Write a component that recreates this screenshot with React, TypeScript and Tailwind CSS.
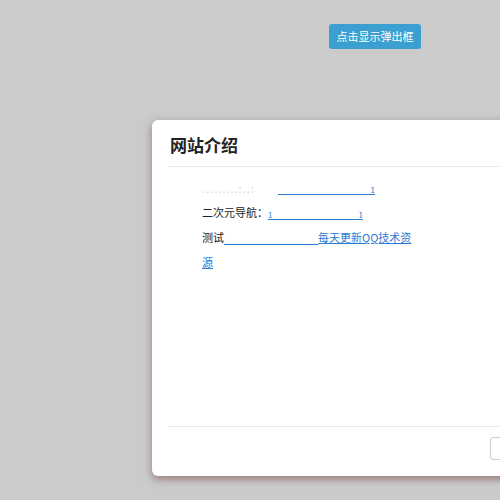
import React from "react";

export default function App() {
  return (
    <div className="w-[500px] h-[500px] bg-[#cbcbcb] overflow-hidden relative" style={{ fontFamily: '"Noto Sans CJK SC", "Liberation Sans", sans-serif' }}>
      <div className="flex justify-end pr-[79px] pt-[24px]">
        <button className="h-[25px] w-[92px] rounded-[3px] bg-[#3b9fd1] text-white text-[11px] leading-[25px]">点击显示弹出框</button>
      </div>
      <div className="absolute left-[152px] top-[120px] w-[420px] h-[356px] bg-white rounded-[6px] shadow-[0_3px_8px_rgba(110,50,50,0.55)] px-[16px] flex flex-col">
        <div className="pt-[13px] pb-[9px] border-b border-[#e8e8e8]">
          <h3 className="text-[17px] font-bold text-[#222] leading-[24px] pl-[2px]" style={{ fontFamily: '"Noto Sans CJK SC", serif' }}>网站介绍</h3>
        </div>
        <div className="flex-1 pl-[34px] pt-[8px] text-[11px] text-[#222] leading-[25px]">
          <div className="w-[217px]">
            <p className="whitespace-nowrap">
              <span className="inline-block w-[76px] text-[#d4d4d4] tracking-[1px] overflow-hidden align-[-3px] h-[14px] leading-[14px]">.........:..:</span>
              <a className="relative inline-block w-[97px] h-[10px] align-[-3px] border-b border-[#2b7bd3]">
                <span className="absolute right-0 bottom-0 text-[8px] leading-none text-[#2b7bd3]">1</span>
              </a>
            </p>
            <p className="whitespace-nowrap">
              二次元导航：<a className="relative inline-block w-[95px] h-[10px] align-[-3px] border-b border-[#2b7bd3]">
                <span className="absolute left-0 bottom-0 text-[8px] leading-none text-[#2b7bd3]">1</span>
                <span className="absolute right-0 bottom-0 text-[8px] leading-none text-[#2b7bd3]">1</span>
              </a>
            </p>
            <p>
              测试<a className="text-[#2b7bd3] underline"><span className="inline-block w-[94px] h-[10px] align-[-3px] border-b border-[#2b7bd3]"></span>每天更新QQ技术资源</a>
            </p>
          </div>
        </div>
        <div className="border-t border-[#e8e8e8] h-[50px] pt-[10px] flex justify-end">
          <div className="mr-[6px] w-[60px] h-[23px] border border-[#ccc] rounded-[3px]"></div>
        </div>
      </div>
    </div>
  );
}
